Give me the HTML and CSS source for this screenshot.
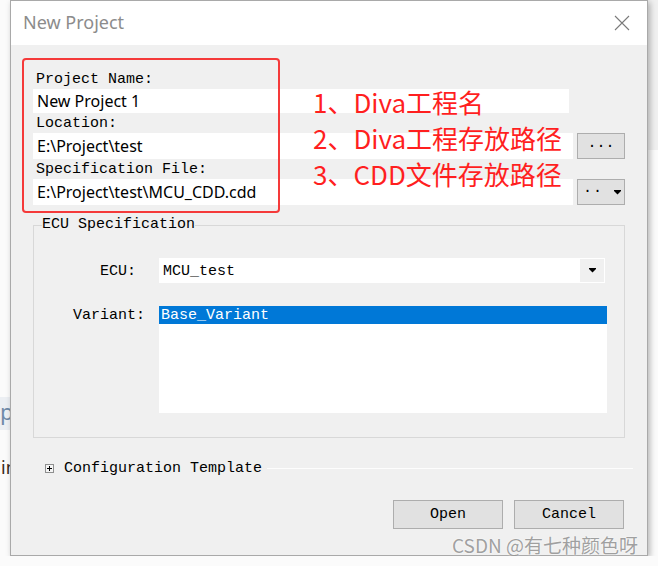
FILE: index.html
```html
<!DOCTYPE html>
<html lang="zh-CN">
<head>
  <meta charset="UTF-8">
  <meta name="viewport" content="width=device-width, initial-scale=1.0">
  <title>New Project</title>
  <link rel="stylesheet" href="styles.css">
</head>
<body>
  <!-- bits of the page behind the dialog -->
  <div class="behind behind-p">p</div>
  <div class="behind behind-in">in</div>
  <div class="behind behind-right"></div>

  <div class="dialog">
    <div class="titlebar">
      <span class="title">New Project</span>
      <svg class="close" width="16" height="16" viewBox="0 0 16 16">
        <path d="M1 1 L15 15 M15 1 L1 15" stroke="#7a7a7a" stroke-width="1.1" fill="none"/>
      </svg>
    </div>

    <div class="content">
      <div class="files">
        <div class="lbl">Project Name:</div>
        <div class="field first">New Project 1</div>
        <div class="lbl">Location:</div>
        <div class="field">E:\Project\test</div>
        <div class="btn browse">...</div>
        <div class="lbl">Specification File:</div>
        <div class="field">E:\Project\test\MCU_CDD.cdd</div>
        <div class="btn browse split"><span>..</span><svg width="7" height="5" viewBox="0 0 7 5"><path d="M0 0 H7 V1 L3.5 4.5 L0 1 Z" fill="#000"/></svg></div>
      </div>

      <fieldset class="group">
        <legend>ECU Specification</legend>
        <div class="ecu-grid">
          <span class="lbl ecu-lbl">ECU:</span>
          <div class="combo">
            <span class="combo-text">MCU_test</span>
            <span class="combo-arrow"><svg width="7" height="5" viewBox="0 0 7 5"><path d="M0 0 H7 V1 L3.5 4.5 L0 1 Z" fill="#000"/></svg></span>
          </div>
          <span class="lbl variant-lbl">Variant:</span>
          <div class="list">
            <div class="list-item selected">Base_Variant</div>
          </div>
        </div>
      </fieldset>

      <div class="template">
        <svg class="expander" width="9" height="9" viewBox="0 0 9 9">
          <rect x="0.5" y="0.5" width="8" height="8" fill="#f4f4f4" stroke="#8e8f8f"/>
          <path d="M2 4.5 H7 M4.5 2 V7" stroke="#000" stroke-width="1"/>
        </svg>
        <span class="template-text">Configuration Template</span>
        <span class="template-line"></span>
      </div>

      <div class="actions">
        <button class="btn action">Open</button>
        <button class="btn action">Cancel</button>
      </div>
    </div>

    <!-- annotation drawn over the screenshot -->
    <div class="mark-box"></div>
    <div class="marks">
      <div>1、Diva工程名</div>
      <div>2、Diva工程存放路径</div>
      <div>3、CDD文件存放路径</div>
    </div>
    <div class="watermark">CSDN @有七种颜色呀</div>
  </div>
</body>
</html>
```

FILE: styles.css
```css
body {
  margin: 0;
  padding: 0 0 0 10px;
  background: #fbfbfb;
  position: relative;
  overflow: hidden;
}
.behind {
  position: absolute;
  z-index: 0;
}
.behind-p {
  left: 0;
  top: 397px;
  width: 14px;
  height: 33px;
  background: #eceff3;
  font-family: "Noto Sans", sans-serif;
  font-size: 22px;
  line-height: 28px;
  color: #6f8aa8;
}
.behind-in {
  left: 1px;
  top: 455px;
  font-family: "Noto Sans", sans-serif;
  font-size: 18px;
  line-height: 24px;
  color: #3a2a1a;
}
.behind-right {
  left: 640px;
  top: 0;
  width: 18px;
  height: 150px;
  background: #f0f0f0;
}
.dialog {
  position: relative;
  z-index: 1;
  width: 636px;
  height: 554px;
  border: 1px solid #a9a9a9;
  background: #f0f0f0;
  box-shadow: 2px 2px 6px rgba(0, 0, 0, 0.28);
  display: flex;
  flex-direction: column;
}
.titlebar {
  height: 44px;
  background: #fff;
  display: flex;
  align-items: center;
  justify-content: space-between;
  padding: 0 17px 0 12px;
}
.title {
  font-family: "Noto Sans", sans-serif;
  font-size: 18px;
  color: #8c8c8c;
  margin-top: -2px;
}
.close {
  margin-top: -1px;
}
.content {
  flex: 1;
  padding: 24px 22px 0 22px;
}
.lbl {
  font-family: "Liberation Mono", monospace;
  font-size: 15px;
  color: #000;
}
.files {
  display: grid;
  grid-template-columns: 1fr 48px;
  column-gap: 4px;
}
.files .lbl {
  grid-column: 1 / -1;
  height: 20px;
  line-height: 22px;
  padding-left: 3px;
}
.field {
  grid-column: 1;
  height: 26px;
  line-height: 26px;
  background: #fff;
  padding-left: 4px;
  font-family: "Noto Sans", sans-serif;
  font-size: 16px;
  color: #000;
  white-space: nowrap;
}
.field.first {
  height: 24px;
  line-height: 24px;
  margin-right: 4px;
}
.btn {
  box-sizing: border-box;
  background: #e1e1e1;
  border: 1px solid #adadad;
  font-family: "Liberation Mono", monospace;
  font-size: 15px;
  color: #000;
}
.browse {
  height: 26px;
  line-height: 20px;
  text-align: center;
}
.split {
  display: flex;
  align-items: center;
  justify-content: space-between;
  padding: 0 3px 0 5px;
  line-height: 18px;
}
.split span {
  align-self: flex-start;
  letter-spacing: 1px;
}
.group {
  margin: 11px 0 0 0;
  padding: 24px 17px 24px 8px;
  border: 1px solid #d8d8d8;
  min-inline-size: 0;
}
.group legend {
  padding: 0;
  font-family: "Liberation Mono", monospace;
  font-size: 15px;
  line-height: 18px;
  color: #000;
}
.ecu-grid {
  display: grid;
  grid-template-columns: 103px 1fr;
  grid-template-rows: 25px 107px;
  column-gap: 14px;
  row-gap: 23px;
}
.ecu-lbl {
  justify-self: end;
  padding-right: 9px;
  height: 25px;
  line-height: 27px;
}
.variant-lbl {
  justify-self: end;
  height: 18px;
  line-height: 20px;
}
.combo {
  height: 25px;
  margin-right: 2px;
  background: #fff;
  display: flex;
  box-sizing: border-box;
  padding: 1px 1px 1px 0;
}
.combo-text {
  flex: 1;
  padding-left: 4px;
  font-family: "Liberation Mono", monospace;
  font-size: 15px;
  line-height: 25px;
}
.combo-arrow {
  width: 24px;
  background: #f0f0f0;
  display: flex;
  align-items: center;
  justify-content: center;
}
.list {
  height: 107px;
  background: #fff;
}
.list-item {
  height: 18px;
  line-height: 19px;
  padding-left: 2px;
  font-family: "Liberation Mono", monospace;
  font-size: 15px;
}
.list-item.selected {
  background: #0078d7;
  color: #fff;
}
.template {
  margin: 20px -8px 0 12px;
  height: 20px;
  display: flex;
  align-items: center;
}
.template-text {
  margin-left: 10px;
  font-family: "Liberation Mono", monospace;
  font-size: 15px;
  color: #000;
}
.template-line {
  flex: 1;
  margin-left: 5px;
  border-top: 1px solid #fdfdfd;
}
.actions {
  margin: 22px 1px 0 0;
  display: flex;
  justify-content: flex-end;
  gap: 11px;
}
.action {
  width: 110px;
  height: 29px;
  padding: 0;
  line-height: 27px;
}
.mark-box {
  position: absolute;
  left: 11px;
  top: 57px;
  width: 254px;
  height: 151px;
  border: 2px solid #f53a3a;
  border-radius: 4px;
}
.marks {
  position: absolute;
  left: 302px;
  top: 83px;
  font-family: "Noto Sans CJK SC", sans-serif;
  font-size: 26px;
  line-height: 36px;
  color: #ff1f1f;
  white-space: nowrap;
}
.watermark {
  position: absolute;
  left: 441px;
  top: 531px;
  font-family: "Noto Sans CJK SC", sans-serif;
  font-size: 19px;
  line-height: 26px;
  color: rgba(130, 130, 130, 0.75);
  text-shadow: 0 0 2px #fff;
  white-space: nowrap;
}
```
